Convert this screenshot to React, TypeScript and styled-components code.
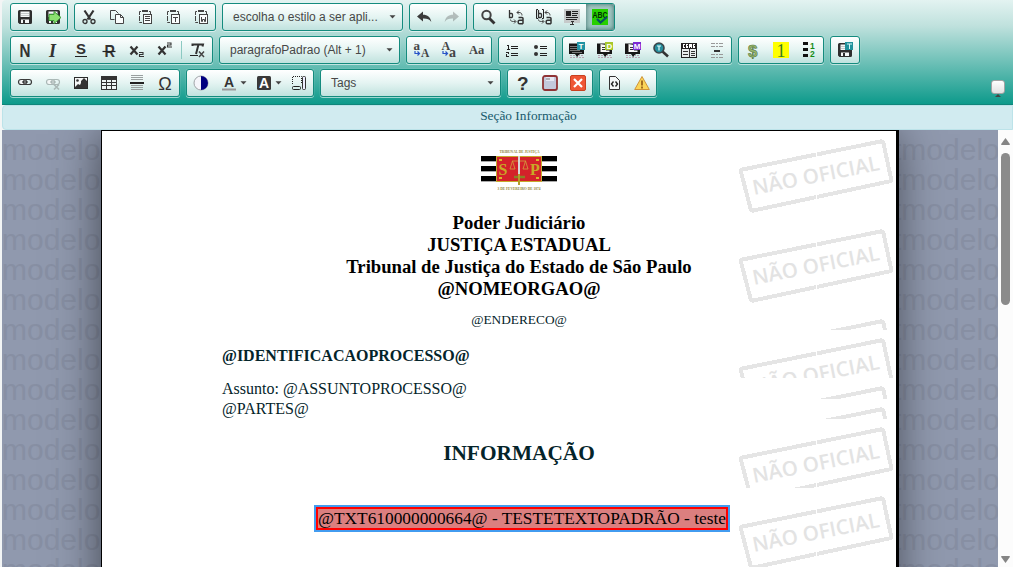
import React from 'react';
import styled, { createGlobalStyle, css } from 'styled-components';

const GlobalStyle = createGlobalStyle`
  html, body, #root { height: 100%; }
  body { margin: 0; overflow: hidden; background: #fff; }
  * { box-sizing: border-box; }
`;

const serif = "'Liberation Serif', 'Times New Roman', serif";
const sans = "'Liberation Sans', Arial, sans-serif";

/* ---------- layout ---------- */

const Shell = styled.div`
  display: flex;
  flex-direction: column;
  width: 1013px;
  height: 567px;
  padding-left: 2px;
  background: #f3f5f5;
  overflow: hidden;
`;

const Toolbar = styled.header`
  display: flex;
  flex: none;
  height: 105px;
  padding: 3px 8px 0;
  border-bottom: 1px solid #10857a;
  border-radius: 4px 0 0 0;
  background: linear-gradient(#e3f3f1 0%, #bfe1dd 25%, #72c2b9 58%, #0d9a8b 100%);
`;

const Rows = styled.div`
  display: flex;
  flex: 1;
  flex-direction: column;
  gap: 5px;
`;

const Row = styled.div`
  display: flex;
  gap: 6px;
  height: 28px;
`;

const panel = css`
  display: flex;
  align-items: center;
  height: 28px;
  border: 1px solid #148b7e;
  border-radius: 3px;
  background: linear-gradient(#ffffff 0%, #e4f4f2 50%, #c0e2de 100%);
  box-shadow: 0 1px 0 rgba(255, 255, 255, 0.55), 0 0 1px rgba(255, 255, 255, 0.7);
`;

const Group = styled.div`
  ${panel}
`;

const Button = styled.button<{ $active?: boolean; $menu?: boolean; $faded?: boolean }>`
  display: flex;
  align-items: center;
  gap: 3px;
  width: ${(p) => (p.$menu ? 35 : 28)}px;
  height: 26px;
  padding: 0 0 0 6px;
  border: 0;
  border-radius: ${(p) => (p.$active ? '0 2px 2px 0' : '0')};
  background: ${(p) => (p.$active ? 'linear-gradient(#a9c9c6, #9cc6c1)' : 'transparent')};
  box-shadow: ${(p) => (p.$active ? 'inset 0 0 5px rgba(0, 60, 55, 0.65)' : 'none')};

  svg { flex: none; overflow: visible; opacity: ${(p) => (p.$faded ? 0.3 : 1)}; }
`;

const Separator = styled.span`
  width: 1px;
  height: 18px;
  margin: 0 2px;
  background: #8cc9c2;
`;

const Combo = styled.div`
  ${panel}
  justify-content: space-between;
  width: 181px;
  padding: 0 6px 1px 10px;
  color: #474747;
  font: 12px/26px ${sans};
  white-space: nowrap;
`;

const CollapseArea = styled.div`
  display: flex;
  flex-direction: column;
  align-items: center;
  width: 14px;
  padding-top: 77px;
`;

const CollapseButton = styled.button`
  width: 14px;
  height: 14px;
  padding: 0;
  border: 1px solid #a4a4a4;
  border-radius: 3px;
  background: linear-gradient(#fff, #e2e2e2);
`;

const SectionBar = styled.div`
  flex: none;
  height: 25px;
  padding-left: 42px;
  border: 1px solid #bce3e9;
  border-radius: 4px 0 0 4px;
  background: #d1ebf0;
  color: #175a6c;
  font: 13.33px/19px ${serif};
  text-align: center;
`;

const Workspace = styled.main`
  display: flex;
  flex: 1;
  min-height: 0;
  overflow: hidden;
  background: #9099ae;
`;

const Margin = styled.div<{ $side: 'left' | 'right' }>`
  width: 99px;
  padding-top: 5px;
  overflow: hidden;
  color: #878fa3;
  font: 30px/30px ${sans};
  white-space: nowrap;

  div { margin-left: ${(p) => (p.$side === 'left' ? 0 : -6)}px; }
`;

const Page = styled.article`
  position: relative;
  z-index: 1;
  width: 798px;
  height: 600px;
  border: solid #000;
  border-width: 1px 3px 0 1px;
  background: #fff;
  box-shadow: -2px 4px 42px rgba(0, 0, 0, 0.52);
`;

const ScrollTrack = styled.div`
  position: relative;
  z-index: 2;
  display: flex;
  flex-direction: column;
  align-items: center;
  width: 15px;
  padding: 8px 0 4px;
  background: #fcfcfc;
`;

const ScrollThumb = styled.div`
  width: 9px;
  height: 152px;
  margin: 8px 0 auto;
  border-radius: 4.5px;
  background: #8b8b8b;
`;

/* ---------- document ---------- */

const Block = styled.section<{ $height: number }>`
  position: relative;
  height: ${(p) => p.$height}px;
  padding: 0 80px 0 120px;
  overflow: hidden;
  color: #04242a;
`;

const Stamps = styled.div`
  position: absolute;
  top: 0;
  right: 0;
  width: 160px;

  svg { display: block; }
`;

const Letterhead = styled.h1`
  margin: 19px 0 0;
  color: #000;
  font: bold 18.67px/22px ${serif};
  text-align: center;
`;

const Address = styled.p`
  margin: 10px 0 0;
  font: 13.33px/20px ${serif};
  text-align: center;
`;

const Process = styled.p<{ $top: number; $bold?: boolean }>`
  margin: ${(p) => p.$top}px 0 0;
  font: ${(p) => (p.$bold ? 'bold' : 'normal')} 16px/20px ${serif};
`;

const Title = styled.h2`
  margin: 22px 0 0;
  font: bold 21.33px/24px ${serif};
  text-align: center;
`;

const TemplateText = styled.div`
  width: 412px;
  height: 23px;
  margin: 19px 0 0 94px;
  border: 2px solid #f00;
  box-shadow: 0 0 0 2px #429cf0;
  background: #db7f7f;
  color: #000;
  font: 17.33px/20px ${serif};
  white-space: nowrap;
`;

const Crest = styled.svg`
  display: block;
  margin: 18px auto 0;
`;

/* ---------- icons ---------- */

const Icon = ({ children, crisp }: { children: React.ReactNode; crisp?: boolean }) => (
  <svg width="16" height="16" viewBox="0 0 16 16" fill="none" stroke="none"
    shapeRendering={crisp ? 'crispEdges' : 'auto'}>
    {children}
  </svg>
);

const Glyph = ({ x, y, size, width, children, font = sans, fill = '#333', weight = 'bold', italic = false }: {
  x: number; y: number; size: number; width?: number; children: string; font?: string; fill?: string;
  weight?: string; italic?: boolean;
}) => (
  <text x={x} y={y} fontSize={size} fontFamily={font} fill={fill} fontWeight={weight}
    textLength={width} lengthAdjust="spacingAndGlyphs"
    fontStyle={italic ? 'italic' : 'normal'}>{children}</text>
);

const Caret = () => (
  <svg width="7" height="4" viewBox="0 0 7 4"><path d="M.5 .3h6L3.500 3.600z" fill="#444" /></svg>
);

const Floppy = () => (
  <>
    <path d="M2.500 1h11A1.500 1.500 0 0 1 15 2.500v11a1.500 1.500 0 0 1-1.500 1.500h-11L1 13.500v-11A1.500 1.500 0 0 1 2.500 1z" fill="#2e2e2e" />
    <path d="M3.500 2.500h9V8h-9zM4 10.500h8V14H4z" fill="#f5f8f8" />
    <path d="M4 4h8v1H4zM4 6h8v1H4z" fill="#c4c9c9" />
    <path d="M6 11h2v3H6z" fill="#2e2e2e" />
  </>
);
const Save = () => <Icon><Floppy /></Icon>;
const SaveClose = () => (
  <Icon><Floppy /><path d="M4 5.500h5V2.500l7 6-7 6v-3H4z" fill="#8ce070" stroke="#3d9a35" /></Icon>
);
const SaveText = () => <Icon><Floppy /><rect x="8" width="8" height="8" fill="#20929c" /><path d="M10 2h5M12.500 2v5" stroke="#d7f6f6" /></Icon>;
const Cut = () => (
  <Icon>
    <path d="M3.500 1.500l6 9M12.500 1.500l-6 9" stroke="#333" strokeWidth="2.200" />
    <circle cx="4" cy="12.500" r="2" stroke="#333" strokeWidth="1.300" /><circle cx="12" cy="12.500" r="2" stroke="#333" strokeWidth="1.300" />
  </Icon>
);
const Copy = () => (
  <Icon>
    <path d="M5.500 10.500h-4v-9h5l3 3" stroke="#444" />
    <path d="M6.500 5.500h5l3 3v6h-8z" fill="#fafdfd" stroke="#444" /><path d="M11.500 5.500v3h3" stroke="#444" />
  </Icon>
);
const Paste = ({ kind }: { kind: 'list' | 'T' | 'W' }) => (
  <Icon>
    <path d="M4 2.500H2.500v11H5M12 2.500h1.500V5" stroke="#444" strokeDasharray="5 1" />
    <path d="M5 1h6v2H5z" fill="#444" />
    <rect x="6.500" y="5.500" width="8" height="9" fill="#fafdfd" stroke="#444" />
    {kind === 'list' && <path d="M8 7.500h5M8 9.500h5M8 11.500h5" stroke="#444" />}
    {kind === 'T' && <path d="M8 8.500h5M10.500 8.500V13" stroke="#444" />}
    {kind === 'W' && <path d="M8.500 8v4.500h1v-2h2v2h1V8" stroke="#444" />}
  </Icon>
);
const Undo = () => (
  <Icon><path d="M1 7.500L7 2.500v3.300c4.500 0 7.500 2 8.300 7.200C13.500 10.200 11 9.400 7 9.500v3z" fill="#3b3b3b" /></Icon>
);
const Redo = () => (
  <Icon><path d="M15 7.500L9 2.500v3.300c-4.500 0-7.500 2-8.300 7.200C2.500 10.200 5 9.400 9 9.500v3z" fill="#3b3b3b" /></Icon>
);
const Find = () => (
  <Icon><circle cx="6.500" cy="6" r="4.200" stroke="#444" strokeWidth="2" /><path d="M9.500 9.500l5 5" stroke="#333" strokeWidth="2.800" /></Icon>
);
const Replace = ({ all }: { all?: boolean }) => (
  <Icon>
    <path d={all ? 'M2.500 1v7.500h2a1 1 0 0 0 1-1V5.500a1 1 0 0 0-1-1h-2' : 'M1.500 1v7.500h2a1 1 0 0 0 1-1V5.500a1 1 0 0 0-1-1h-2'} stroke="#333" strokeWidth="1.300" />
    <path d="M10.500 8.500H14a1 1 0 0 1 1 1v5.300M15 11.200h-3.500a1.300 1.300 0 0 0-1.300 1.500v.8a1.300 1.300 0 0 0 1.300 1.300H15" stroke="#333" strokeWidth="1.500" />
    <path d="M14 6.500c0-2-1-3-3-3H9M11 1.500l-2 2 2 2M2.500 10.500c0 1.500 1 2 3 2h2M6 10.500l2 2-2 2" stroke="#444" />
    {all && <path d="M2 .5H.5v9H2M6 .5h1.500v9H6" stroke="#222" />}
  </Icon>
);
const SelectAll = () => (
  <Icon crisp>
    <path d="M0 0h16v14H0z" fill="#c6caca" /><path d="M2 2h5v5H2zM8 2h6v1H8zM8 4h6v1H8zM8 6h5v1H8zM2 8h12v1H2zM2 10h11v1H2z" fill="#222" />
    <path d="M6 12h1v1h1v2H6v1h4v-1H9v-2h1v-1H6z" fill="#333" />
  </Icon>
);
const Spell = () => (
  <Icon><path d="M0 0h16v16H0z" fill="#27cf00" /><Glyph x={0.500} y={8.500} size={9.500} width={15} fill="#002b00">ABC</Glyph><path d="M5 10l3.500 3.500L15 8" stroke="#075064" strokeWidth="2.200" /></Icon>
);
const Bold = () => <Icon><Glyph x={2.500} y={14.500} size={18} width={11}>N</Glyph></Icon>;
const Italic = () => <Icon><Glyph x={4} y={14.500} size={18} font={serif} italic>I</Glyph></Icon>;
const Underline = () => <Icon><Glyph x={3} y={12} size={15}>S</Glyph><path d="M2 14.500h12" stroke="#222" /></Icon>;
const Strike = () => <Icon><Glyph x={3.500} y={14.500} size={17} width={10.500}>R</Glyph><path d="M1.500 9.500h13" stroke="#222" strokeWidth="1.200" /></Icon>;
const Sub = ({ up }: { up?: boolean }) => (
  <Icon>
    <path d="M1.500 4.500l7 8M8.500 4.500l-7 8" stroke="#333" strokeWidth="2.200" />
    <path transform={up ? 'translate(0 -9.500)' : undefined} d="M10 10.500h4v2h-3.500v2H15" stroke="#333" strokeWidth="1.100" />
  </Icon>
);
const ClearFormat = () => (
  <Icon><path d="M2.500 4V2.500H13L12.500 4.500M8.500 2.500L6 12" stroke="#333" strokeWidth="2" /><path d="M0 13.500h8" stroke="#222" /><path d="M9 9.500l5 5.500M14 9.500L9 15" stroke="#444" strokeWidth="1.500" /></Icon>
);
const Lower = ({ invert }: { invert?: boolean }) => (
  <Icon>
    <Glyph x={0.500} y={8} size={invert ? 12 : 13} font={serif} fill="#444">{invert ? 'A' : 'a'}</Glyph>
    <Glyph x={8} y={14.500} size={invert ? 14 : 11.500} font={serif} fill="#444">{invert ? 'a' : 'A'}</Glyph>
    <path d="M2 9v2.500h4M4.500 9.500l2 2-2 2" stroke="#2753c7" strokeWidth="1.200" />
  </Icon>
);
const CaseIcon = () => <Icon><Glyph x={0} y={12} size={12.500} font={serif} fill="#444">Aa</Glyph></Icon>;
const Numbered = () => (
  <Icon crisp>
    <path d="M2 3h2v4h1v1H2V7h1V4H2zM1 10h3v2H2v2h2v1H1v-3h2v-1H1z" fill="#222" />
    <path d="M6 4h7v1H6zM6 6h7v1H6zM6 11h7v1H6zM6 13h7v1H6z" fill="#222" />
  </Icon>
);
const Bullets = () => (
  <Icon><circle cx="3" cy="5" r="2" fill="#333" /><circle cx="3" cy="12" r="2" fill="#333" /><path d="M7 4.500h7M7 6.500h7M7 11.500h7M7 13.500h7" stroke="#222" /></Icon>
);
const Book = ({ letter, color, dark }: { letter: string; color: string; dark?: boolean }) => (
  <Icon>
    <path d="M0 1.500h9V8h6v4h-4l-3 3-2-3H0z" fill="#171717" />
    {dark
      ? <path d="M1 4.500h7M1 6.500h7M1 8.500h10M3 10.500h10" stroke="#777" />
      : <><path d="M3.500 2L9 3v7H3.500z" fill="#f8f8f8" /><path d="M9 8.500h3.500V10H9z" fill="#f8f8f8" /><path d="M5 5.500h3M5 7.500h3" stroke="#333" /></>}
    <path d="M1 13.500h5M9 13.500h6M1 15.500h14" stroke="#b9a3b4" strokeDasharray="2 1" />
    <rect x="8" width="8" height="8" fill={color} />
    <Glyph x={letter === 'M' ? 8.700 : 9.500} y={7} size={8} fill="#fff">{letter}</Glyph>
  </Icon>
);
const FindText = () => (
  <Icon><path d="M9.500 9.500l5.500 5" stroke="#333" strokeWidth="2.600" /><circle cx="6" cy="6" r="5" fill="#258d9c" stroke="#3a4448" strokeWidth="1.600" /><path d="M4 4h4M6 4v4.500" stroke="#e3ffff" strokeWidth="1.200" /></Icon>
);
const Header = () => (
  <Icon crisp><path d="M0 1h16v15H0z" fill="#222" /><path d="M1 7h14v8H1z" fill="#e9eeee" /><path d="M2 2h2v1H3v2h1v1H2zM5 2h2v1H6v1h1v2H5zM8 2h3v4h-1V5H9v1H8zM12 2h2v1h-1v1h1v2h-2z" fill="#fff" /><path d="M2 9h5v1H2zM2 12h5v1H2zM8 7h1v8H8zM10 9h4v1h-4zM10 11h4v1h-4zM10 13h4v1h-4z" fill="#333" /></Icon>
);
const PageBreak = () => (
  <Icon crisp>
    <path d="M2 1.500h12M2 4.500h12M2 12.500h12M2 15.500h12" stroke="#999" strokeDasharray="4 1 2 1" />
    <path d="M5 8h6v2H5z" fill="#333" />
  </Icon>
);
const Dollar = () => (
  <Icon><text x="3" y="14.500" fontFamily={sans} fontSize="17" fontWeight="bold" fill="#9ab76d" stroke="#547640" strokeWidth=".6">$</text></Icon>
);
const One = () => <Icon><path d="M0 0h16v16H0z" fill="#ff0" /><Glyph x={3.500} y={14.500} size={18} font={serif} fill="#397d25" weight="normal">1</Glyph></Icon>;
const OneTwo = () => (
  <Icon><path d="M2 0h5v3H2zM2 6h5v3H2zM2 12h5v3H2z" fill="#111" /><Glyph x={9} y={6.500} size={8.500} fill="#168b16">1</Glyph><Glyph x={9} y={15} size={8.500} fill="#168b16">2</Glyph></Icon>
);
const Link = ({ off }: { off?: boolean }) => (
  <Icon>
    <g stroke={off ? '#aab8b6' : '#3a3a3a'} strokeWidth="1.200">
      <rect x="1.500" y="4.500" width="8" height="5" rx="2.500" fill="#f4f6f6" /><rect x="6.500" y="4.500" width="8" height="5" rx="2.500" /><path d="M5 7h6" />
      {off && <path d="M9 9.500l5 5M14 9.500l-5 5" strokeWidth="1.600" />}
    </g>
  </Icon>
);
const Picture = () => (
  <Icon><rect x="1.500" y="2.500" width="13" height="11" fill="#f5f7f7" stroke="#2b2b2b" /><path d="M2 12l3-3 2 1 1-2V6l3-3 3 3v7H2z" fill="#333" /><circle cx="4.500" cy="5.500" r="1.300" fill="#333" /></Icon>
);
const Table = () => (
  <Icon crisp><path d="M0 1h16v14H0z" fill="#333" /><path d="M1 5h4v2H1zM6 5h4v2H6zM11 5h4v2h-4zM1 8h4v2H1zM6 8h4v2H6zM11 8h4v2h-4zM1 11h4v3H1zM6 11h4v3H6zM11 11h4v3h-4z" fill="#eef5f5" /></Icon>
);
const Rule = () => (
  <Icon crisp><path d="M2 0h12v1H2zM2 2h12v1H2zM2 4h12v1H2zM2 10h12v1H2zM2 12h12v1H2zM2 14h12v1H2z" fill="#999f9f" /><path d="M1 7h14v2H1z" fill="#222" /></Icon>
);
const Omega = () => <Icon><Glyph x={1.200} y={14.500} size={18} weight="normal">Ω</Glyph></Icon>;
const Contrast = () => (
  <Icon><circle cx="8" cy="8" r="7" fill="#f5f5fa" stroke="#a1a5a9" /><path d="M8 1a7 7 0 0 1 0 14z" fill="#000080" /></Icon>
);
const TextColor = () => <Icon><Glyph x={3} y={11.500} size={14}>A</Glyph><path d="M1 13.500h14v2H1z" fill="#999" /></Icon>;
const FillColor = () => (
  <Icon><rect x="1" y="1" width="14" height="14" rx="1.500" fill="#393939" /><Glyph x={3} y={13} size={14} fill="#fff">A</Glyph></Icon>
);
const Blocks = () => (
  <Icon><path d="M1.500 9V1.500h9V9" stroke="#222" strokeDasharray="1 1" /><rect x="1.500" y="11.500" width="8" height="3" rx="1" stroke="#222" /><rect x="11.500" y="1.500" width="3" height="13" rx="1" fill="#eef" stroke="#333" /></Icon>
);
const Help = () => <Icon><Glyph x={3} y={15} size={19}>?</Glyph></Icon>;
const NoteIcon = () => (
  <Icon><rect x="1" y="1" width="14" height="14" rx="2" fill="#c3c9dc" stroke="#8f3335" strokeWidth="1.800" /><path d="M4 2h8v4H4z" fill="#e5e8f4" /><path d="M5 3v2M7 3v2" stroke="#777" /></Icon>
);
const Close = () => (
  <Icon><rect x=".5" y=".5" width="15" height="15" rx="1.500" fill="#ef5635" stroke="#c84120" /><path d="M4 4l8 8M12 4l-8 8" stroke="#fff" strokeWidth="2.200" /></Icon>
);
const Source = () => (
  <Icon><path d="M3.500 1.500h6l4 4v9h-10z" fill="#f5f8f8" stroke="#333" /><path d="M7.500 6.500L5.500 9l2 2.500M9.500 6.500l2 2.500-2 2.500" stroke="#222" strokeWidth="1.400" /></Icon>
);
const Warning = () => (
  <Icon><path d="M8 1.500L15.300 14.500H.7z" fill="#fbd558" stroke="#cf9339" strokeLinejoin="round" /><path d="M8 5.500v5M8 11.500v2" stroke="#9a641b" strokeWidth="1.800" /></Icon>
);

/* ---------- watermark and crest ---------- */

const Stamp = () => (
  <svg width="160" height="90" viewBox="0 0 160 90" shapeRendering="crispEdges">
    <path d="M6.500 38.500L144.500 10.500Q147 10 147.500 12.500L155 47.500Q155.500 50 153 50.500L17.500 79.500Q15 80 14.500 77.500L5 41Q4.500 39 6.500 38.500Z" fill="none" stroke="#e5e5e5" strokeWidth="4" />
    <text transform="translate(18 64) rotate(-11.200)" textLength="129" lengthAdjust="spacingAndGlyphs"
      fontFamily="'Open Sans', 'Noto Sans', sans-serif" fontWeight="600" fontSize="20.500" fill="#e3e3e3">NÃO OFICIAL</text>
    <path d="M80.500 0v32M80.500 60v20" stroke="#fff" />
  </svg>
);

const Watermark = ({ count = 1 }: { count?: number }) => (
  <Stamps aria-hidden>{Array.from({ length: count }, (_, i) => <Stamp key={i} />)}</Stamps>
);

const CrestArt = () => (
  <Crest width="76" height="44" viewBox="0 0 76 44">
    <text x="18.500" y="4.200" fontFamily={serif} fontSize="4.300" fontWeight="bold" textLength="40" lengthAdjust="spacingAndGlyphs" fill="#8f8539">TRIBUNAL DE JUSTIÇA</text>
    <path d="M0 7h76v5H0zM0 17h76v5H0zM0 27h76v5H0z" fill="#000" />
    <path d="M0 12h76v1H0zM0 22h76v1H0zM0 32h76v1H0z" fill="#aaa" />
    <rect x="15.500" y="7.500" width="45" height="25" fill="#d4222a" stroke="#c7a92e" />
    <g fill="#c9a927" fontFamily={serif} fontWeight="bold"><text x="17.500" y="26" fontSize="16">S</text><text x="49" y="26" fontSize="16">P</text></g>
    <path d="M31 12h14M31.500 12l-2.500 8h5zM44.500 12L42 20h5z" stroke="#d2a23c" strokeWidth=".8" fill="none" />
    <path d="M33 28h11" stroke="#8b8125" strokeWidth="2.500" />
    <path d="M38 7v18" stroke="#d8d8d8" strokeWidth="2" /><path d="M38 25v11" stroke="#b59c2b" strokeWidth="2" />
    <path d="M18 11h3M55 11h3M18 29h3M55 29h3" stroke="#dcb72d" strokeWidth="2" />
    <text x="16.500" y="40.500" fontFamily={serif} fontSize="4.300" fontWeight="bold" textLength="43" lengthAdjust="spacingAndGlyphs" fill="#8f8539">3 DE FEVEREIRO DE 1874</text>
  </Crest>
);

/* ---------- toolbar groups ---------- */

const B = Button;
const groupOf = (icons: React.ReactNode[]) => (
  <Group>{icons.map((icon, i) => <B key={i}>{icon}</B>)}</Group>
);
const Select = ({ label }: { label: string }) => <Combo><span>{label}</span><Caret /></Combo>;

const tileRows = Array.from({ length: 15 }, (_, i) => i);

export default function App() {
  return (
    <Shell>
      <GlobalStyle />
      <Toolbar>
        <Rows>
          <Row>
            {groupOf([<Save />, <SaveClose />])}
            {groupOf([<Cut />, <Copy />, <Paste kind="list" />, <Paste kind="T" />, <Paste kind="W" />])}
            <Select label="escolha o estilo a ser apli..." />
            <Group><B><Undo /></B><B $faded><Redo /></B></Group>
            <Group>
              <B><Find /></B><B><Replace /></B><B><Replace all /></B><B><SelectAll /></B>
              <B $active><Spell /></B>
            </Group>
          </Row>
          <Row>
            <Group>
              <B><Bold /></B><B><Italic /></B><B><Underline /></B><B><Strike /></B><B><Sub /></B><B><Sub up /></B>
              <Separator />
              <B><ClearFormat /></B>
            </Group>
            <Select label="paragrafoPadrao (Alt + 1)" />
            {groupOf([<Lower />, <Lower invert />, <CaseIcon />])}
            {groupOf([<Numbered />, <Bullets />])}
            {groupOf([
              <Book letter="T" color="#2093a3" dark />, <Book letter="D" color="#a7c72c" />,
              <Book letter="M" color="#7c2bd4" />, <FindText />, <Header />, <PageBreak />,
            ])}
            {groupOf([<Dollar />, <One />, <OneTwo />])}
            {groupOf([<SaveText />])}
          </Row>
          <Row>
            {groupOf([<Link />, <Link off />, <Picture />, <Table />, <Rule />, <Omega />])}
            <Group>
              <B><Contrast /></B>
              <B $menu><TextColor /><Caret /></B>
              <B $menu><FillColor /><Caret /></B>
              <B><Blocks /></B>
            </Group>
            <Select label="Tags" />
            {groupOf([<Help />, <NoteIcon />, <Close />])}
            {groupOf([<Source />, <Warning />])}
          </Row>
        </Rows>
        <CollapseArea>
          <CollapseButton />
          <svg width="6" height="3" viewBox="0 0 6 3"><path d="M3 0l3 3H0z" fill="#444" /></svg>
        </CollapseArea>
      </Toolbar>
      <SectionBar>Seção Informação</SectionBar>
      <Workspace>
        <Margin $side="left">{tileRows.map((i) => <div key={i}>modelo</div>)}</Margin>
        <Page>
          <Block $height={199}>
            <Watermark count={3} />
            <CrestArt />
            <Letterhead>
              Poder Judiciário<br />JUSTIÇA ESTADUAL<br />
              Tribunal de Justiça do Estado de São Paulo<br />@NOMEORGAO@
            </Letterhead>
            <Address>@ENDERECO@</Address>
          </Block>
          <Block $height={48}><Watermark /><Process $top={16} $bold>@IDENTIFICACAOPROCESSO@</Process></Block>
          <Block $height={21}><Watermark /><Process $top={1}>Assunto: @ASSUNTOPROCESSO@</Process></Block>
          <Block $height={20}><Watermark /><Process $top={0}>@PARTES@</Process></Block>
          <Block $height={69}><Watermark /><Title>INFORMAÇÃO</Title></Block>
          <Block $height={112}>
            <Watermark />
            <TemplateText>@TXT610000000664@ - TESTETEXTOPADRÃO - teste</TemplateText>
          </Block>
        </Page>
        <Margin $side="right">{tileRows.map((i) => <div key={i}>tmodelo</div>)}</Margin>
        <ScrollTrack>
          <svg width="9" height="7" viewBox="0 0 9 7"><path d="M4.500 0L9 6.200Q9 7 8 7H1Q0 7 0 6.200z" fill="#858585" /></svg>
          <ScrollThumb />
          <svg width="9" height="7" viewBox="0 0 9 7"><path d="M4.500 7L9 .8Q9 0 8 0H1Q0 0 0 .8z" fill="#858585" /></svg>
        </ScrollTrack>
      </Workspace>
    </Shell>
  );
}
